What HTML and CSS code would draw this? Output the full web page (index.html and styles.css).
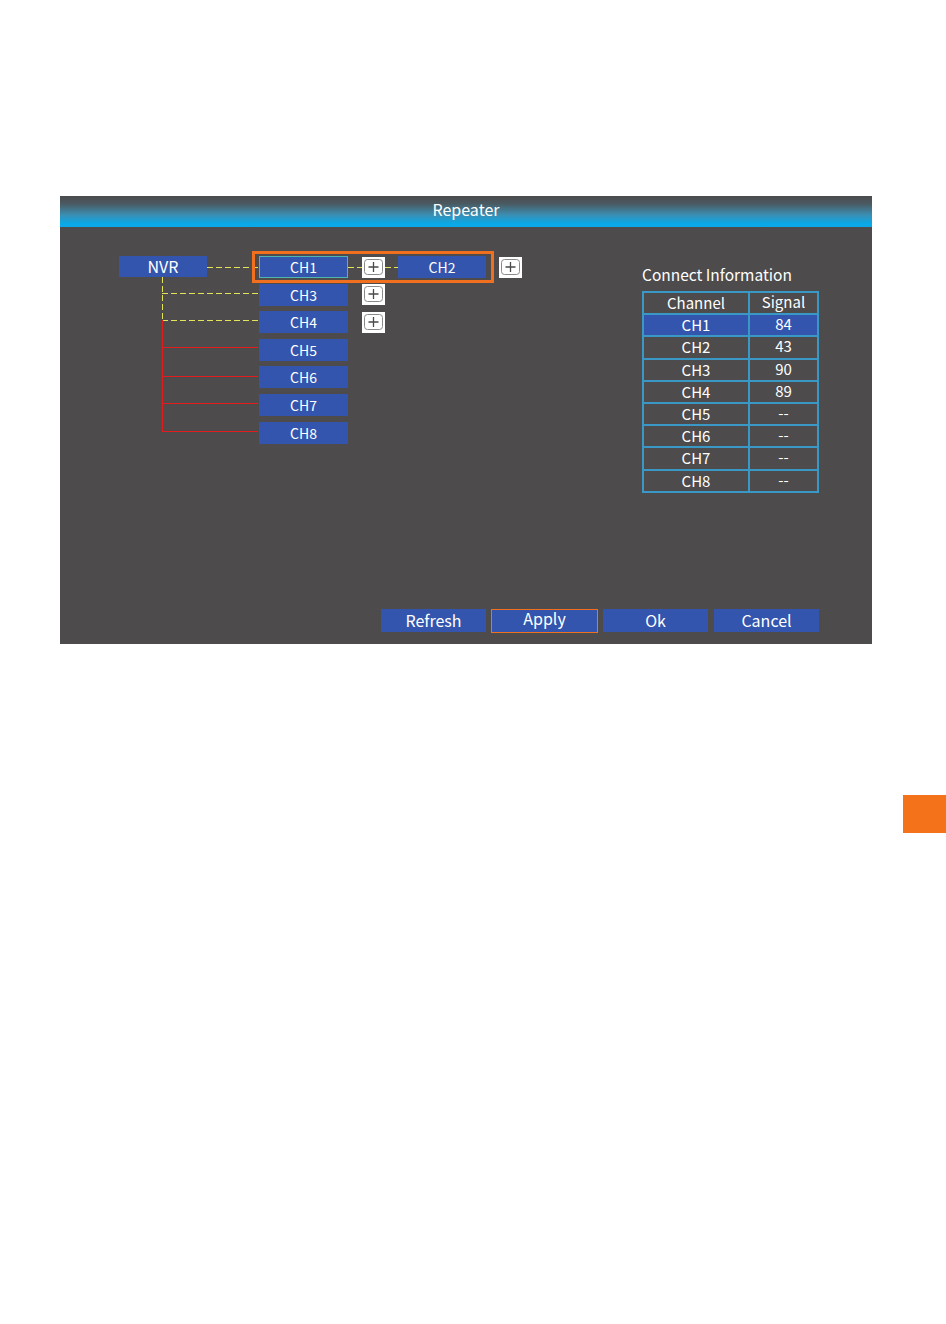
FILE: index.html
```html
<!DOCTYPE html>
<html lang="en">
<head>
  <meta charset="UTF-8" />
  <meta name="viewport" content="width=device-width, initial-scale=1.0"/>
  <title>Repeater</title>
  <link rel="stylesheet" href="styles.css">
</head>
<body>
  <div class="page">
    <div class="panel">
      <div class="titlebar">Repeater</div>

      <div class="panel-body">
        <div class="content">
          <!-- topology of the repeater chain -->
          <div class="diagram">
            <svg class="links" width="540" height="230" viewBox="0 0 540 230">
              <g stroke="#e4e45a" stroke-width="1" stroke-dasharray="6 3" fill="none">
                <path d="M147 40.5 H199" />
                <path d="M288 40.5 H302" />
                <path d="M325 40.5 H338" />
                <path d="M102.5 50 V93" />
                <path d="M102 66.5 H199" />
                <path d="M102 93.5 H199" />
              </g>
              <g stroke="#e21c1c" stroke-width="1" fill="none">
                <path d="M102.5 93 V205" />
                <path d="M102 120.5 H198" />
                <path d="M102 149.5 H198" />
                <path d="M102 176.5 H198" />
                <path d="M102 204.5 H198" />
              </g>
            </svg>

            <div class="frame"></div>

            <div class="node nvr">NVR</div>
            <div class="node ch current" style="top: 29px">CH1</div>
            <div class="node ch" style="top: 57px">CH3</div>
            <div class="node ch" style="top: 84px">CH4</div>
            <div class="node ch" style="top: 112px">CH5</div>
            <div class="node ch" style="top: 139px">CH6</div>
            <div class="node ch" style="top: 167px">CH7</div>
            <div class="node ch" style="top: 195px">CH8</div>
            <div class="node ch2">CH2</div>

            <div class="add" style="left: 302px; top: 30px">
              <svg width="23" height="21" viewBox="0 0 23 21"><rect x="2.5" y="2.5" width="18" height="15" rx="3" fill="none" stroke="#8a8a8a"/><path d="M6.5 10 H16.5 M11.5 5 V15" stroke="#4a4a4a" stroke-width="1.3"/></svg>
            </div>
            <div class="add" style="left: 439px; top: 30px">
              <svg width="23" height="21" viewBox="0 0 23 21"><rect x="2.5" y="2.5" width="18" height="15" rx="3" fill="none" stroke="#8a8a8a"/><path d="M6.5 10 H16.5 M11.5 5 V15" stroke="#4a4a4a" stroke-width="1.3"/></svg>
            </div>
            <div class="add" style="left: 302px; top: 57px">
              <svg width="23" height="21" viewBox="0 0 23 21"><rect x="2.5" y="2.5" width="18" height="15" rx="3" fill="none" stroke="#8a8a8a"/><path d="M6.5 10 H16.5 M11.5 5 V15" stroke="#4a4a4a" stroke-width="1.3"/></svg>
            </div>
            <div class="add" style="left: 302px; top: 85px">
              <svg width="23" height="21" viewBox="0 0 23 21"><rect x="2.5" y="2.5" width="18" height="15" rx="3" fill="none" stroke="#8a8a8a"/><path d="M6.5 10 H16.5 M11.5 5 V15" stroke="#4a4a4a" stroke-width="1.3"/></svg>
            </div>
          </div>

          <div class="info">
            <div class="info-title">Connect Information</div>
            <table class="signal-table">
              <tr><th>Channel</th><th class="sig">Signal</th></tr>
              <tr class="selected"><td>CH1</td><td class="sig">84</td></tr>
              <tr><td>CH2</td><td class="sig">43</td></tr>
              <tr><td>CH3</td><td class="sig">90</td></tr>
              <tr><td>CH4</td><td class="sig">89</td></tr>
              <tr><td>CH5</td><td class="sig">--</td></tr>
              <tr><td>CH6</td><td class="sig">--</td></tr>
              <tr><td>CH7</td><td class="sig">--</td></tr>
              <tr><td>CH8</td><td class="sig">--</td></tr>
            </table>
          </div>
        </div>

        <div class="actions">
          <button>Refresh</button>
          <button class="focused">Apply</button>
          <button>Ok</button>
          <button class="last">Cancel</button>
        </div>
      </div>
    </div>

    <div class="side-tab"></div>
  </div>
</body>
</html>
```

FILE: styles.css
```css
body {
  margin: 0;
  background: #fff;
  font-family: "Noto Sans CJK SC", "Noto Sans", sans-serif;
  color: #fff;
}

.page {
  padding: 196px 0 0 60px;
}

.panel {
  width: 812px;
  height: 448px;
  background: #4d4b4c;
  display: flex;
  flex-direction: column;
}

.titlebar {
  height: 31px;
  line-height: 27px;
  text-align: center;
  font-size: 16px;
  background: linear-gradient(to bottom, #4b4a4b 0%, #4a5a62 25%, #3c8db0 60%, #0ba8e6 88%, #0aa9e8 100%);
}

.panel-body {
  flex: 1;
  display: flex;
  flex-direction: column;
}

.content {
  display: flex;
}

.diagram {
  position: relative;
  width: 540px;
  height: 230px;
}

.links {
  position: absolute;
  left: 0;
  top: 0;
}

.frame {
  position: absolute;
  left: 192px;
  top: 24px;
  width: 242px;
  height: 32px;
  box-sizing: border-box;
  border: 3px solid #f07020;
}

.node {
  position: absolute;
  box-sizing: border-box;
  background: #3355ad;
  text-align: center;
  font-size: 14px;
  height: 22px;
  line-height: 22px;
}

.nvr {
  left: 59px;
  top: 29px;
  width: 88px;
  height: 21px;
  line-height: 21px;
  font-size: 16px;
}

.ch {
  left: 199px;
  width: 89px;
}

.ch.current {
  border: 1px solid #4fb5ad;
  line-height: 20px;
}

.ch2 {
  left: 338px;
  top: 29px;
  width: 88px;
}

.add {
  position: absolute;
  width: 23px;
  height: 21px;
  background: #fff;
}

.add svg {
  display: block;
}

.info {
  margin-left: 42px;
  padding-top: 37px;
}

.info-title {
  font-size: 15.5px;
  line-height: 20px;
  margin-bottom: 7px;
}

.signal-table {
  border-collapse: collapse;
  border: 2px solid #3a98c6;
  font-size: 15px;
}

.signal-table th,
.signal-table td {
  border: 2px solid #3a98c6;
  padding: 0;
  height: 20.2px;
  line-height: 20px;
  text-align: center;
  font-weight: normal;
  width: 104px;
}

.signal-table .sig {
  width: 67px;
  vertical-align: top;
  line-height: 17px;
}

.signal-table .selected td {
  background: #3355ad;
}

.actions {
  margin-top: auto;
  display: flex;
  justify-content: flex-end;
  gap: 5px;
  padding: 0 53px 11px 0;
}

.actions button {
  width: 105px;
  height: 23px;
  padding: 0;
  border: none;
  background: #3355ad;
  color: #fff;
  font-family: inherit;
  font-size: 16px;
  line-height: 23px;
}

.actions .focused {
  width: 107px;
  height: 24px;
  border: 1px solid #f07020;
  padding-bottom: 5px;
  line-height: 17px;
}

.actions .last {
  margin-left: 1px;
}

.side-tab {
  width: 43px;
  height: 38px;
  margin: 151px 0 0 843px;
  background: #f4731a;
}
```
